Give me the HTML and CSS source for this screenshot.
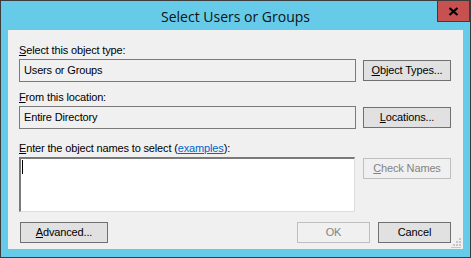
FILE: index.html
```html
<!DOCTYPE html>
<html lang="en">
	<head>
		<meta charset="UTF-8" />
		<title>Select Users or Groups</title>
		<link rel="stylesheet" href="styles.css">
	</head>
	<body>
		<div class="window">
			<div class="titlebar">
				<span class="title">Select Users or Groups</span>
				<div class="close-btn">
					<svg width="11" height="9" viewBox="0 0 11 9">
						<path d="M1.5 1 L9.5 8 M9.5 1 L1.5 8" stroke="#000" stroke-width="2.2" />
					</svg>
				</div>
			</div>

			<div class="client">
				<div class="label"><u>S</u>elect this object type:</div>
				<div class="row">
					<div class="field">Users or Groups</div>
					<div class="btn"><u>O</u>bject Types...</div>
				</div>

				<div class="label"><u>F</u>rom this location:</div>
				<div class="row">
					<div class="field">Entire Directory</div>
					<div class="btn"><u>L</u>ocations...</div>
				</div>

				<div class="label label-gap"><u>E</u>nter the object names to select (<a class="link" href="#">examples</a>):</div>
				<div class="row row-top">
					<div class="names-box"><span class="caret"></span></div>
					<div class="btn btn-disabled"><u>C</u>heck Names</div>
				</div>

				<div class="footer">
					<div class="btn"><u>A</u>dvanced...</div>
					<div class="footer-right">
						<div class="btn btn-small btn-disabled">OK</div>
						<div class="btn btn-small">Cancel</div>
					</div>
				</div>

				<svg class="grip" width="10" height="10" viewBox="0 0 10 10">
					<rect x="8" y="0" width="2" height="2" fill="#c6c6c6" />
					<rect x="5" y="3" width="2" height="2" fill="#c6c6c6" />
					<rect x="8" y="3" width="2" height="2" fill="#c6c6c6" />
					<rect x="2" y="6" width="2" height="2" fill="#c6c6c6" />
					<rect x="5" y="6" width="2" height="2" fill="#c6c6c6" />
					<rect x="8" y="6" width="2" height="2" fill="#c6c6c6" />
					<rect x="0" y="9" width="10" height="1" fill="#c6c6c6" />
				</svg>
			</div>
		</div>
	</body>
</html>
```

FILE: styles.css
```css
* {
	margin: 0;
	padding: 0;
	box-sizing: border-box;
}

body {
	font-family: "Liberation Sans", Arial, sans-serif;
	font-size: 11px;
	letter-spacing: -0.15px;
	color: #000;
	background: #fff;
}

.window {
	width: 471px;
	height: 258px;
	background: #65cbe9;
	border: 1px solid #3c3c3c;
	display: flex;
	flex-direction: column;
	padding: 0 7px 8px 7px;
}

.titlebar {
	position: relative;
	height: 29px;
	display: flex;
	align-items: center;
	justify-content: center;
}

.title {
	font-family: "Open Sans", "Liberation Sans", sans-serif;
	font-size: 14px;
	letter-spacing: 0;
	color: #111;
	margin-top: 2px;
}

.close-btn {
	position: absolute;
	top: -1px;
	right: -7px;
	width: 33px;
	height: 22px;
	background: #c75050;
	border: 1px solid #3c3c3c;
	display: flex;
	align-items: center;
	justify-content: center;
}

.client {
	position: relative;
	flex: 1;
	background: #f0f0f0;
	padding: 12px 0 0 11px;
}

.label {
	height: 15px;
	line-height: 16px;
	margin-bottom: 2px;
	margin-top: 7px;
}

.label:first-child {
	margin-top: 0;
}

.label-gap {
	margin-top: 11px;
}

.row {
	display: grid;
	grid-template-columns: 337px 88px;
	column-gap: 7px;
	align-items: center;
	height: 23px;
}

.row-top {
	align-items: start;
	height: 55px;
}

.field {
	height: 23px;
	border: 1px solid #7a7a7a;
	background: #f0f0f0;
	padding-left: 4px;
	line-height: 21px;
}

.btn {
	width: 88px;
	height: 21px;
	border: 1px solid #707070;
	background: #e1e1e1;
	text-align: center;
	line-height: 19px;
}

.row-top .btn {
	margin-top: 1px;
}

.btn-small {
	width: 73px;
}

.btn-disabled {
	border-color: #bfbfbf;
	background: #f0f0f0;
	color: #838383;
}

.names-box {
	width: 336px;
	height: 55px;
	background: #fff;
	border-top: 2px solid #7a7a7a;
	border-left: 2px solid #7a7a7a;
	border-right: 1px solid #dcdcdc;
	border-bottom: 1px solid #dcdcdc;
	padding: 1px 0 0 1px;
}

.caret {
	display: block;
	width: 1px;
	height: 14px;
	background: #000;
}

.link {
	color: #0066cc;
	text-decoration: underline;
}

.footer {
	display: flex;
	justify-content: space-between;
	margin-top: 10px;
	padding-left: 1px;
	padding-right: 12px;
}

.footer-right {
	display: flex;
	gap: 8px;
}

.grip {
	position: absolute;
	right: 2px;
	bottom: 1px;
}
```
